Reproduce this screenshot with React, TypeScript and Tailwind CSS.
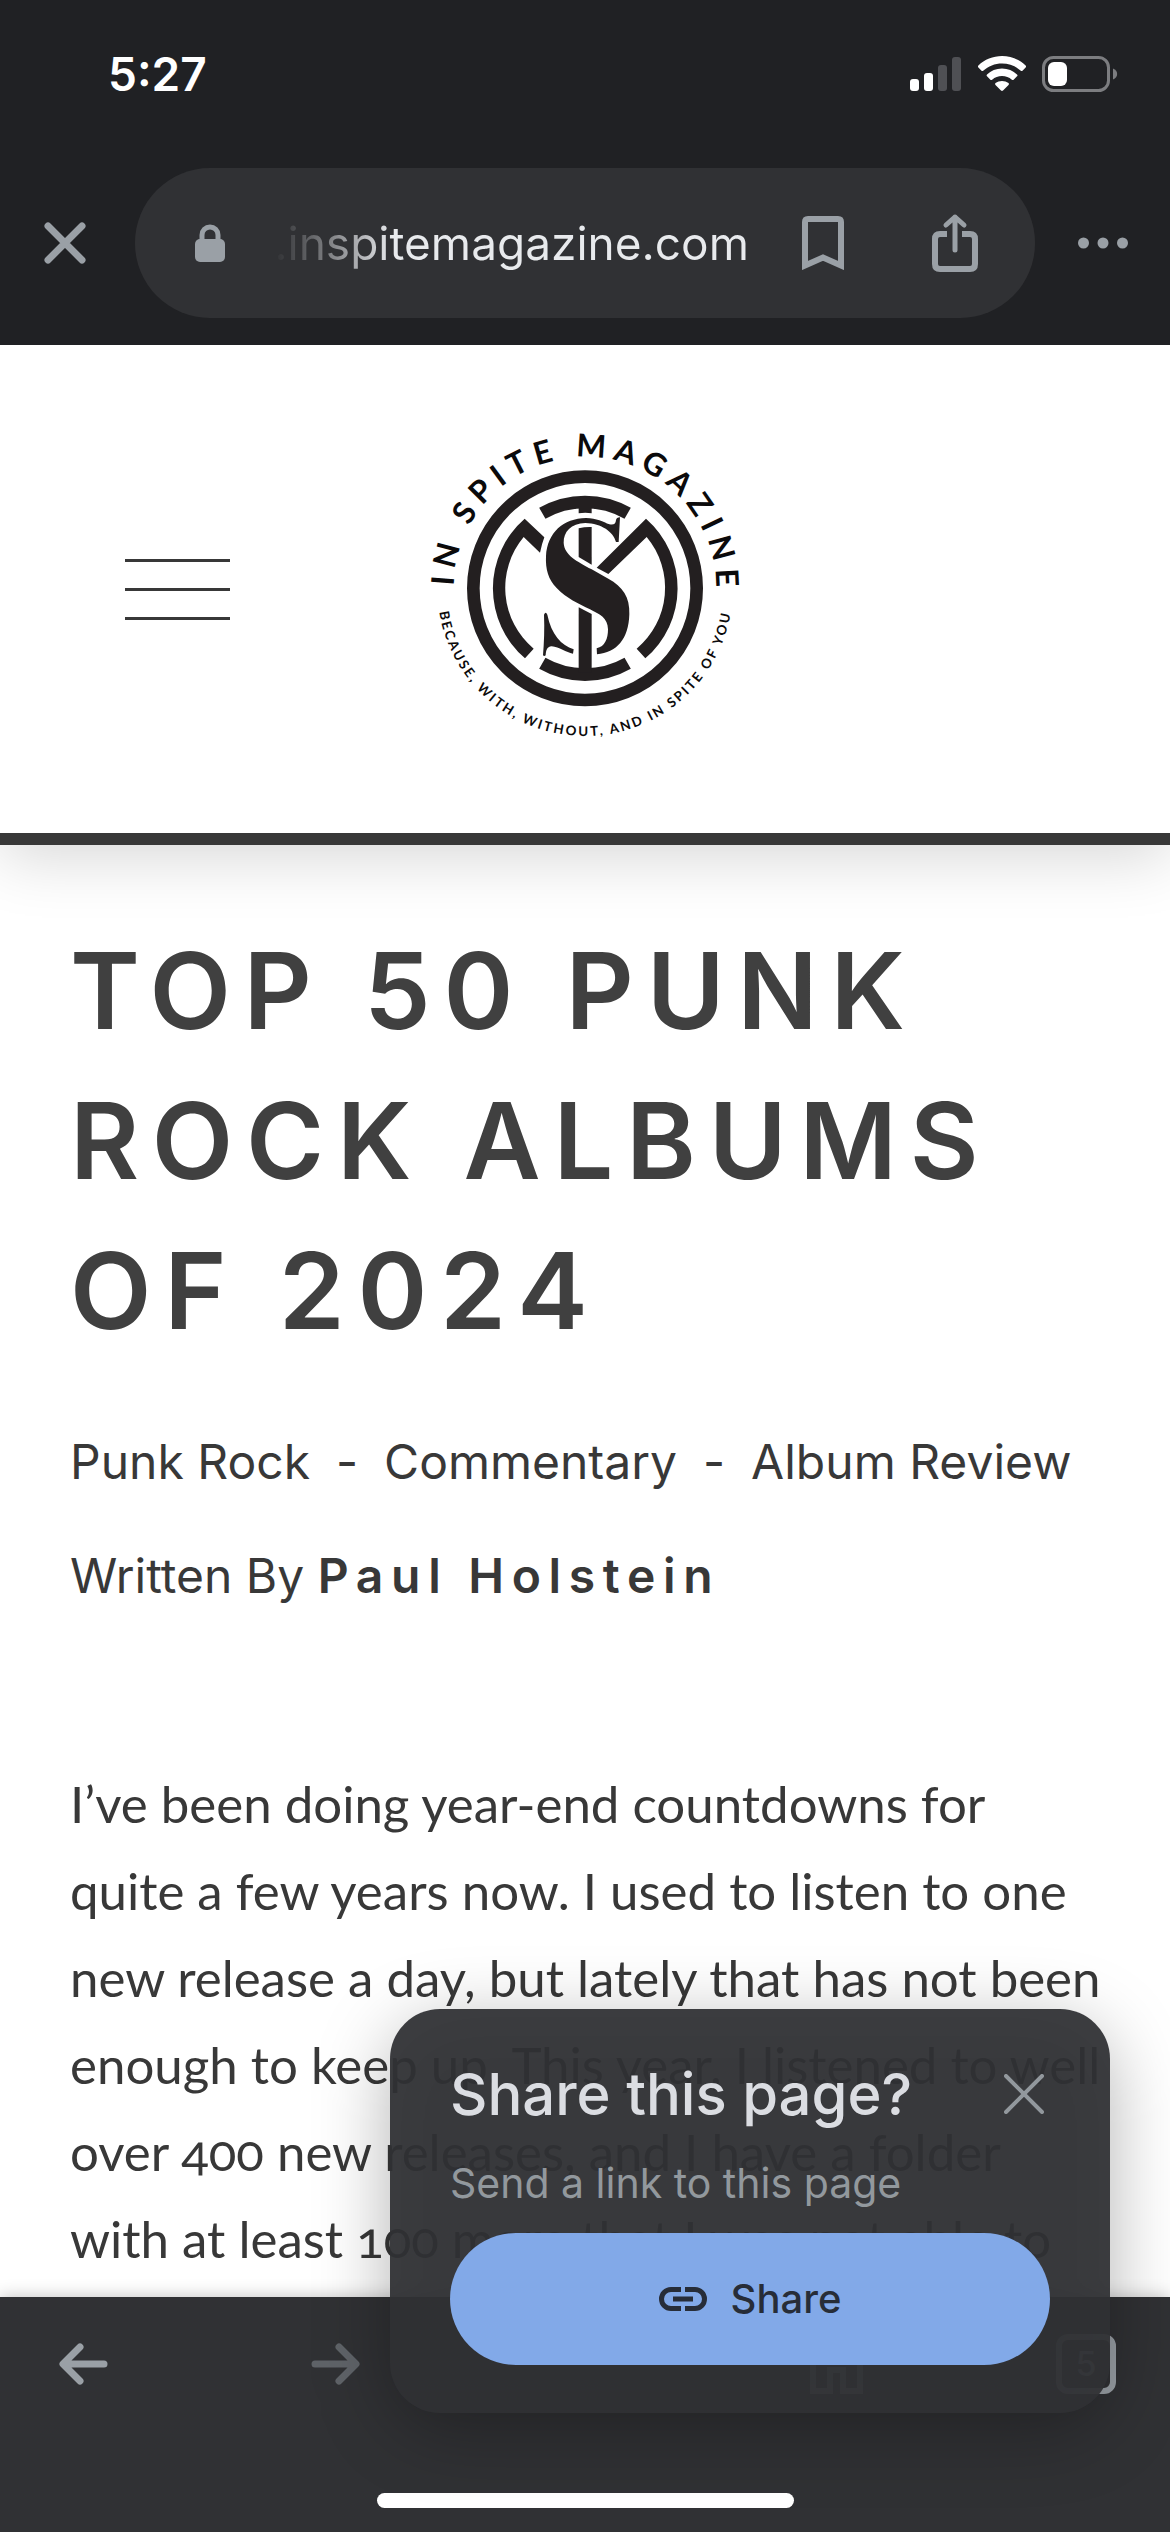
import React from "react";

function SignalIcon() {
  return (
    <svg className="h-9 w-13" viewBox="0 0 52 36" aria-hidden="true">
      <rect x="0" y="23" width="9" height="12" rx="3" fill="#fff" />
      <rect x="14" y="17" width="9" height="18" rx="3" fill="#fff" />
      <rect x="28" y="9" width="9" height="26" rx="3" fill="#4f5054" />
      <rect x="42" y="1" width="9" height="34" rx="3" fill="#4f5054" />
    </svg>
  );
}

function WifiIcon() {
  return (
    <svg className="h-9 w-12" viewBox="0 0 48 36" fill="#fff" aria-hidden="true">
      <path d="M24 0C33 0 41.500 3.500 47.600 9.500Q48.600 10.500 47.600 11.500L44.500 14.700Q43.700 15.500 42.800 14.700C37.700 10 31.200 7.400 24 7.400S10.300 10 5.200 14.700Q4.300 15.500 3.500 14.700L.4 11.500Q-.6 10.500 .4 9.500C6.500 3.500 15 0 24 0Z" />
      <path d="M24 12.600C30 12.600 35 14.800 39 18.400Q40 19.400 39 20.300L35.600 23.700Q34.800 24.400 33.900 23.700C31 21.300 27.800 20 24 20S17 21.300 14.100 23.700Q13.200 24.400 12.400 23.700L9 20.300Q8 19.400 9 18.400C13 14.800 18 12.600 24 12.600Z" />
      <path d="M24 25C26.500 25 28.600 25.700 30.500 27.100Q31.500 28 30.500 29L25 34.600Q24 35.500 23 34.600L17.500 29Q16.500 28 17.500 27.100C19.400 25.700 21.500 25 24 25Z" />
    </svg>
  );
}

function BatteryIcon() {
  return (
    <svg className="h-9 w-19" viewBox="0 0 76 36" aria-hidden="true">
      <rect x="1.500" y="1.500" width="65" height="33" rx="10" fill="none" stroke="#7c7d80" strokeWidth="3" />
      <rect x="6" y="6" width="19" height="24" rx="6" fill="#fff" />
      <path d="M71 12.500C76.500 14.500 76.500 21.500 71 23.500Z" fill="#7c7d80" />
    </svg>
  );
}

function BandLogo() {
  return (
    <svg className="h-[350px] w-[370px]" viewBox="0 14 1110 1050" role="img" aria-label="In Spite Magazine">
      <defs>
        <path id="arc-top" d="M161 537A394 394 0 0 1 949 537" />
        <path id="arc-bottom" d="M112 537A443 443 0 0 0 998 537" />
      </defs>
      <g fill="none" stroke="#231f20" strokeWidth="38">
        <circle cx="555" cy="537" r="335" />
        <path d="M427 312A258 258 0 0 1 683 312" />
        <path d="M427 762A258 258 0 0 0 683 762" />
      </g>
      <g fill="#231f20">
        <path d="M374 328L433 384Q426 402 420 430L371 383A238 238 0 0 0 401 718L375 747A277 277 0 0 1 374 328Z" />
        <path d="M738 328A277 277 0 0 1 736 747L710 718A238 238 0 0 0 740 383L625 494L590 475Z" />
        <path d="M536 290H575V312Q556 308 536 312Z" />
        <path d="M536 357Q556 352 575 353V466L536 443Z" />
        <path d="M536 594L575 614V790H536Z" />
        <path d="M648 332Q649 325 660 324L656 398H648C640 368 605 342 556 341C513 342 490 368 491 400C493 438 530 455 575 480L625 508C668 532 690 562 688 615C686 690 650 730 591 735L590 717C615 712 624 688 624 660C623 625 600 616 570 600C535 583 500 567 470 536C445 511 436 480 438 440C442 370 490 327 558 326C590 326 610 338 628 345C642 348 647 343 648 332Z" />
        <path d="M432 616Q437 605 442 616C454 675 484 708 521 720L519 733C498 730 478 713 455 711C440 712 438 725 437 738Q433 742 429 738C432 700 434 660 432 616Z" />
      </g>
      <g fill="#0b0a0b" className="font-[Lato] font-bold" textAnchor="middle">
        <text fontSize="94" letterSpacing="21">
          <textPath href="#arc-top" startOffset="51%">IN SPITE MAGAZINE</textPath>
        </text>
        <text fontSize="40" letterSpacing="7">
          <textPath href="#arc-bottom" startOffset="50%">BECAUSE, WITH, WITHOUT, AND IN SPITE OF YOU</textPath>
        </text>
      </g>
    </svg>
  );
}

function StatusBar() {
  return (
    <div className="flex h-[148px] items-center justify-between pr-13 pl-27">
      <time className="text-[46px] leading-none font-semibold text-white">5:27</time>
      <div className="flex items-center gap-4">
        <SignalIcon />
        <WifiIcon />
        <BatteryIcon />
      </div>
    </div>
  );
}

function AddressBar() {
  return (
    <div className="flex items-center gap-5 px-5 pt-5 pb-[27px] text-[#9aa0a6]">
      <button aria-label="Close" className="flex w-[95px] justify-start pl-[23px]">
        <svg className="size-[44px]" viewBox="0 0 44 44" stroke="currentColor" strokeWidth="7" strokeLinecap="round" aria-hidden="true">
          <path d="M5 5L39 39M39 5L5 39" />
        </svg>
      </button>
      <div className="flex h-[150px] flex-1 items-center rounded-full bg-[#303134] pr-14 pl-15">
        <svg className="h-[38px] w-[30px] shrink-0" viewBox="0 0 30 38" aria-hidden="true">
          <rect x="0" y="15" width="30" height="23" rx="5" fill="currentColor" />
          <path d="M7 17V11A8 8 0 0 1 23 11V17" fill="none" stroke="currentColor" strokeWidth="5" />
        </svg>
        <span className="ml-auto bg-linear-to-r from-[#303134] to-[#e8eaed] to-25% bg-clip-text text-[46px] leading-[60px] text-transparent">
          .inspitemagazine.com
        </span>
        <button aria-label="Bookmark" className="ml-[53px]">
          <svg className="h-[54px] w-[42px]" viewBox="0 0 42 54" fill="none" stroke="currentColor" strokeWidth="6" aria-hidden="true">
            <path d="M3 49.500V6Q3 3 6 3H36Q39 3 39 6V49.500L21 41.500Z" />
          </svg>
        </button>
        <button aria-label="Share" className="ml-[87px]">
          <svg className="h-[60px] w-[48px]" viewBox="0 0 48 60" fill="none" stroke="currentColor" strokeWidth="6" aria-hidden="true">
            <path d="M16 21H9Q4 21 4 26V51Q4 56 9 56H39Q44 56 44 51V26Q44 21 39 21H31" />
            <path d="M24 37V4M15 12L24 4L33 12" strokeWidth="5" strokeLinecap="round" strokeLinejoin="round" />
          </svg>
        </button>
      </div>
      <button aria-label="More" className="flex w-[95px] justify-center">
        <svg className="h-3 w-[50px]" viewBox="0 0 50 12" fill="currentColor" aria-hidden="true">
          <circle cx="5.500" cy="6" r="5.500" />
          <circle cx="25" cy="6" r="5.500" />
          <circle cx="44.500" cy="6" r="5.500" />
        </svg>
      </button>
    </div>
  );
}

function SiteHeader() {
  return (
    <header className="relative z-10 grid grid-cols-[1fr_auto_1fr] items-center border-b-12 border-[#383838] bg-white py-[69px] shadow-[0_12px_60px_rgba(0,0,0,0.16)]">
      <button aria-label="Menu" className="ml-[125px] flex w-[105px] flex-col gap-[26px]">
        <span className="h-[3px] bg-[#383838]" />
        <span className="h-[3px] bg-[#383838]" />
        <span className="h-[3px] bg-[#383838]" />
      </button>
      <a href="#home">
        <BandLogo />
      </a>
    </header>
  );
}

function Article() {
  return (
    <article className="px-[70px] pt-[71px] text-[#383838]">
      <h1 className="text-[106px] leading-[150px] font-semibold tracking-[0.12em] text-[#404040]">
        TOP 50 PUNK
        <br />
        ROCK ALBUMS
        <br />
        OF 2024
      </h1>
      <p className="mt-[60px] flex gap-[26px] text-[48px] leading-[72px] whitespace-nowrap">
        <a href="#punk-rock">Punk Rock</a>
        <span>-</span>
        <a href="#commentary">Commentary</a>
        <span>-</span>
        <a href="#album-review">Album Review</a>
      </p>
      <p className="mt-[42px] text-[48px] leading-[72px]">
        Written By <a href="#paul-holstein" className="font-semibold tracking-[0.16em]">Paul Holstein</a>
      </p>
      <p className="mt-[148px] font-[Lato] text-[51px] leading-[87px] whitespace-nowrap oldstyle-nums">
        I’ve been doing year-end countdowns for
        <br />
        quite a few years now. I used to listen to one
        <br />
        new release a day, but lately that has not been
        <br />
        enough to keep up. This year, I listened to well
        <br />
        over 400 new releases, and I have a folder
        <br />
        with at least 100 more that I was not able to
      </p>
    </article>
  );
}

function BottomBar() {
  return (
    <footer className="relative flex h-[235px] flex-col justify-between bg-[#303134] pt-[37px] pb-6 text-[#9aa0a6] shadow-[0_0_16px_rgba(0,0,0,0.25)]">
      <nav className="flex items-center justify-between px-[54px]">
        <button aria-label="Back" className="flex size-15 items-center justify-center">
          <svg className="size-[50px]" viewBox="0 0 50 50" fill="none" stroke="currentColor" strokeWidth="7" strokeLinecap="round" strokeLinejoin="round" aria-hidden="true">
            <path d="M45 25H5M21 8L4 25L21 42" />
          </svg>
        </button>
        <button aria-label="Forward" disabled className="flex size-15 items-center justify-center text-[#5f6368]">
          <svg className="size-[50px]" viewBox="0 0 50 50" fill="none" stroke="currentColor" strokeWidth="7" strokeLinecap="round" strokeLinejoin="round" aria-hidden="true">
            <path d="M5 25H45M29 8L46 25L29 42" />
          </svg>
        </button>
        <span className="size-15" />
        <button aria-label="Home" className="flex size-15 items-center justify-center">
          <svg className="size-15" viewBox="0 0 60 60" fill="none" stroke="currentColor" strokeWidth="6" aria-hidden="true">
            <path d="M7 57V21L30.500 4L54 21V57H37V36H24V57Z" />
          </svg>
        </button>
        <button className="flex size-15 items-center justify-center rounded-xl border-6 border-current text-[34px] leading-none font-medium">
          5
        </button>
      </nav>
      <div className="h-[15px] w-[417px] self-center rounded-full bg-white" />
    </footer>
  );
}

function SharePrompt() {
  return (
    <div className="absolute right-15 bottom-[119px] z-20 w-[720px]">
      <div className="absolute inset-x-0 top-4 -bottom-4 rounded-[60px] bg-black/30 blur-[36px]" />
      <section aria-label="Share this page" className="relative rounded-[50px] bg-[#303134]/94 px-15 pt-[45px] pb-12">
        <div className="flex items-center justify-between">
          <h2 className="text-[58px] leading-20 font-medium text-[#dbdde2]">Share this page?</h2>
          <button aria-label="Dismiss" className="mr-1.5 text-[#92989d]">
            <svg className="size-10" viewBox="0 0 40 40" stroke="currentColor" strokeWidth="4" strokeLinecap="round" aria-hidden="true">
              <path d="M2 2L38 38M38 2L2 38" />
            </svg>
          </button>
        </div>
        <p className="mt-6 text-[41px] leading-[50px] text-[#92989d]">Send a link to this page</p>
        <button className="mt-[25px] flex h-[132px] w-full items-center justify-center gap-6 rounded-full bg-[#82a9e8] text-[40px] font-medium text-[#272d38]">
          <svg className="h-6 w-12" viewBox="0 0 48 24" fill="none" stroke="currentColor" strokeWidth="5" aria-hidden="true">
            <path d="M22 2.500H12A9.500 9.500 0 0 0 12 21.500H22M26 2.500H36A9.500 9.500 0 0 1 36 21.500H26M14 12H34" />
          </svg>
          Share
        </button>
      </section>
    </div>
  );
}

export default function App() {
  return (
    <div className="relative flex h-screen flex-col overflow-hidden bg-white font-[Inter,sans-serif]">
      <div className="bg-[#202124]">
        <StatusBar />
        <AddressBar />
      </div>
      <main className="min-h-0 flex-1 overflow-hidden">
        <SiteHeader />
        <Article />
      </main>
      <BottomBar />
      <SharePrompt />
    </div>
  );
}
